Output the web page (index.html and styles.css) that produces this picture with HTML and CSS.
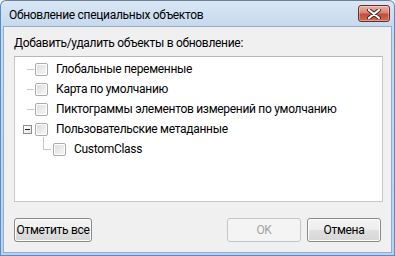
FILE: index.html
```html
<!DOCTYPE html>
<html lang="ru">
<head>
  <meta charset="UTF-8">
  <title>Обновление специальных объектов</title>
  <link rel="stylesheet" href="styles.css">
</head>
<body>

  <div class="window">
    <!-- Заголовок окна -->
    <div class="titlebar">
      <span class="title">Обновление специальных объектов</span>
      <button class="close-btn" title="Закрыть">
        <svg width="16" height="10" viewBox="0 0 16 10">
          <path d="M3 1 L13 9 M13 1 L3 9" stroke="#4a2320" stroke-width="4" stroke-linecap="round"/>
          <path d="M3 1 L13 9 M13 1 L3 9" stroke="#ffffff" stroke-width="2.2" stroke-linecap="round"/>
        </svg>
      </button>
    </div>

    <div class="client">
      <div class="caption">Добавить/удалить объекты в обновление:</div>

      <!-- Дерево объектов -->
      <div class="tree">
        <div class="row">
          <span class="exp"><i class="stub"></i></span>
          <span class="cb"></span>
          <span class="text">Глобальные переменные</span>
        </div>
        <div class="row">
          <span class="exp"><i class="stub"></i></span>
          <span class="cb"></span>
          <span class="text">Карта по умолчанию</span>
        </div>
        <div class="row">
          <span class="exp"><i class="stub"></i></span>
          <span class="cb"></span>
          <span class="text">Пиктограммы элементов измерений по умолчанию</span>
        </div>
        <div class="row">
          <span class="exp"><i class="minus"></i></span>
          <span class="cb"></span>
          <span class="text">Пользовательские метаданные</span>
        </div>
        <div class="row child">
          <span class="exp"><i class="corner"></i></span>
          <span class="cb"></span>
          <span class="text">CustomClass</span>
        </div>
      </div>

      <div class="footer">
        <button class="btn">Отметить все</button>
        <span class="spacer"></span>
        <button class="btn ok-btn" disabled>OK</button>
        <button class="btn cancel-btn">Отмена</button>
      </div>
    </div>
  </div>

</body>
</html>
```

FILE: styles.css
```css
body {
  margin: 0;
  font-family: Roboto, "Noto Sans", sans-serif;
  font-size: 12px;
  letter-spacing: -0.3px;
  color: #000;
  background: #ffffff;
}

.window {
  width: 395px;
  height: 256px;
  box-sizing: border-box;
  display: flex;
  flex-direction: column;
  padding: 0 2px 2px 2px;
  border: 1px solid #4f8fcf;
  border-top-color: #6a7f98;
  border-radius: 6px 6px 0 0;
  background: linear-gradient(to bottom, #dae7f5 0, #c6d9ee 25px, #bad2ec 100%);
  overflow: hidden;
}

.titlebar {
  height: 25px;
  display: flex;
  align-items: flex-start;
  flex-shrink: 0;
}

.title {
  margin: 6px 0 0 6px;
  line-height: 16px;
}

.close-btn {
  margin: 4px 2px 0 auto;
  width: 32px;
  height: 17px;
  padding: 0;
  display: flex;
  align-items: center;
  justify-content: center;
  border: 1px solid #6c2b24;
  border-radius: 3px;
  background: linear-gradient(to bottom, #e9b3a8 0, #d88476 45%, #c44e3c 55%, #cf6b4f 100%);
  box-shadow: inset 0 0 0 1px rgba(255, 255, 255, 0.35);
}

.client {
  flex: 1;
  display: flex;
  flex-direction: column;
  border: 1px solid #98abc3;
  background: #f0f0f0;
  padding: 9px 8px 10px 10px;
}

.caption {
  line-height: 15px;
  margin-bottom: 5px;
}

.tree {
  height: 146px;
  box-sizing: border-box;
  border: 1px solid #c9c9c9;
  border-top-color: #b8b8b8;
  background: #ffffff;
  padding-top: 2px;
}

.row {
  height: 20px;
  display: flex;
  align-items: center;
  padding-left: 8px;
}

.row.child {
  padding-left: 26px;
}

.exp {
  position: relative;
  width: 12px;
  height: 20px;
  flex-shrink: 0;
}

.stub {
  position: absolute;
  left: 4px;
  top: 10px;
  width: 7px;
  height: 1px;
  background: #c8c8c8;
}

.minus {
  position: absolute;
  left: 0;
  top: 6px;
  width: 7px;
  height: 7px;
  border: 1px solid #8c8c8c;
  background: linear-gradient(to bottom right, #ffffff, #e4e4e4);
}

.minus::after {
  content: "";
  position: absolute;
  left: 1px;
  top: 3px;
  width: 5px;
  height: 1px;
  background: #222;
}

.corner {
  position: absolute;
  left: 2px;
  top: -2px;
  width: 7px;
  height: 12px;
  border-left: 1px solid #c8c8c8;
  border-bottom: 1px solid #c8c8c8;
}

.cb {
  width: 11px;
  height: 11px;
  flex-shrink: 0;
  margin-right: 8px;
  border: 1px solid #ababab;
  border-radius: 2px;
  background: linear-gradient(135deg, #dcdcdc, #f8f8f8);
  box-shadow: inset 0 0 0 1px #ffffff;
}

.text {
  white-space: nowrap;
  line-height: 16px;
}

.footer {
  margin-top: 16px;
  display: flex;
  gap: 6px;
  padding-right: 2px;
}

.spacer {
  flex: 1;
}

.btn {
  height: 24px;
  width: 78px;
  padding: 0;
  font-family: inherit;
  font-size: 12px;
  letter-spacing: -0.3px;
  color: #000;
  border: 1px solid #8a8a8a;
  border-radius: 3px;
  background: linear-gradient(to bottom, #f4f4f4 0, #ededed 50%, #e0e0e0 50%, #d6d6d6 100%);
  box-shadow: inset 0 0 0 1px #fcfcfc;
}

.ok-btn,
.cancel-btn {
  width: 74px;
}

.ok-btn:disabled {
  color: #a3a3a3;
  border-color: #c2c6c9;
  background: #f4f4f4;
  box-shadow: none;
}
```
